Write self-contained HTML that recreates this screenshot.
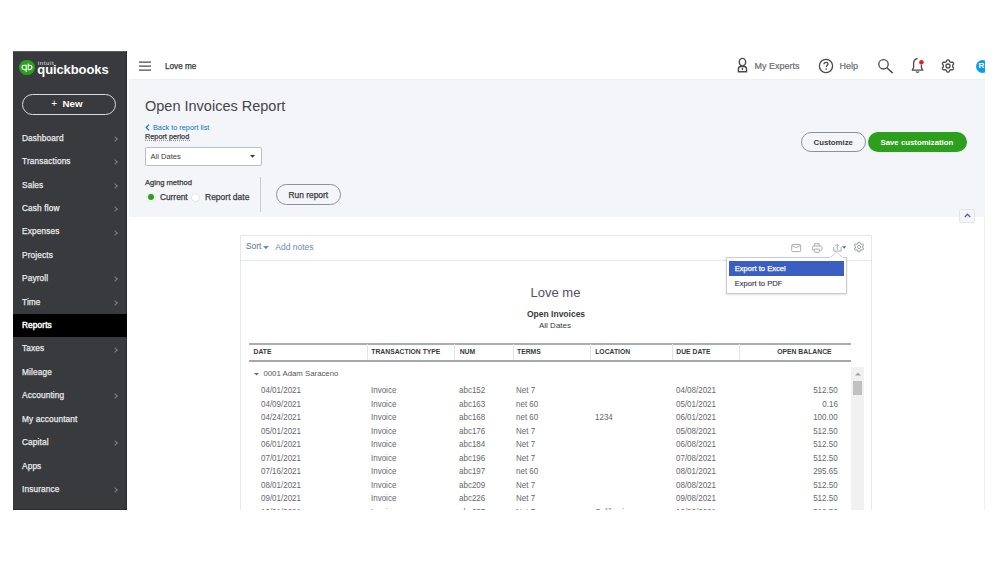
<!DOCTYPE html>
<html><head><meta charset="utf-8"><style>
*{margin:0;padding:0;box-sizing:border-box}
html,body{width:999px;height:562px;overflow:hidden;background:#fff;font-family:"Liberation Sans",sans-serif;color:#393a3d}
.a{position:absolute;white-space:nowrap;line-height:1}
.nav{position:absolute;left:13px;width:114px;height:23px;color:#e8eaed;font-size:8.3px;letter-spacing:0.12px;line-height:23px;padding-left:9px;-webkit-text-stroke:0.25px #e8eaed}
.nav .ch{position:absolute;left:100px;top:10.2px;width:4px;height:4px;border-top:1px solid #7d8087;border-right:1px solid #7d8087;transform:rotate(45deg)}
.nav.sel{background:#000;color:#fff;-webkit-text-stroke:0.45px #fff}
.td{position:absolute;font-size:8.7px;color:#66676d;line-height:1;white-space:nowrap;transform:scaleX(0.92);transform-origin:0 0}
.td.r{transform-origin:100% 0}
.th{position:absolute;font-size:6.8px;font-weight:bold;color:#393a3d;line-height:1;white-space:nowrap}
</style></head><body>
<div class="a" style="left:13px;top:51px;width:114px;height:459px;background:#393a3d"></div>
<div class="a" style="left:13px;top:51px;width:114px;height:1px;background:#5a5b5e"></div>
<div class="a" style="left:126px;top:51px;width:1px;height:459px;background:#2b2c2f"></div>
<div class="a" style="left:129px;top:79px;width:856px;height:1px;background:#eceef2"></div>
<div class="a" style="left:129px;top:80px;width:856px;height:137px;background:#f4f5f8"></div>
<div class="a" style="left:19.4px;top:59.7px;width:15.6px;height:15.6px;border-radius:50%;background:#2ca01c"></div>
<svg class="a" style="left:19.4px;top:59.7px" width="16" height="16" viewBox="0 0 16 16">
<path d="M7.2 5.3 H5.2 A2.2 2.15 0 0 0 5.2 9.6 H7.2 M7.2 4.8 V12.0" fill="none" stroke="#fff" stroke-width="1.1"/>
<path d="M9.2 5.3 H10.75 A2.2 2.15 0 0 1 10.75 9.6 H9.2 M9.2 3.4 V10.1" fill="none" stroke="#fff" stroke-width="1.1"/>
</svg>
<div class="a" style="left:37.8px;top:59.9px;color:#e6e6e6;font-size:6px;letter-spacing:0.65px">intuit</div>
<div class="a" style="left:37.3px;top:63px;color:#fff;font-size:13px;font-weight:bold;letter-spacing:-0.1px">quickbooks</div>
<div class="a" style="left:22px;top:93.5px;width:94px;height:21.5px;border:1.3px solid #dcdcdc;border-radius:11px"></div>
<div class="a" style="left:51.2px;top:99.3px;color:#fff;font-size:10px">+</div>
<div class="a" style="left:62.5px;top:99px;color:#fff;font-size:9.7px;font-weight:bold">New</div>
<div class="nav" style="top:126.80px">Dashboard<i class="ch"></i></div>
<div class="nav" style="top:150.21px">Transactions<i class="ch"></i></div>
<div class="nav" style="top:173.62px">Sales<i class="ch"></i></div>
<div class="nav" style="top:197.03px">Cash flow<i class="ch"></i></div>
<div class="nav" style="top:220.44px">Expenses<i class="ch"></i></div>
<div class="nav" style="top:243.85px">Projects</div>
<div class="nav" style="top:267.26px">Payroll<i class="ch"></i></div>
<div class="nav" style="top:290.67px">Time<i class="ch"></i></div>
<div class="nav sel" style="top:314.08px">Reports</div>
<div class="nav" style="top:337.49px">Taxes<i class="ch"></i></div>
<div class="nav" style="top:360.90px">Mileage</div>
<div class="nav" style="top:384.31px">Accounting<i class="ch"></i></div>
<div class="nav" style="top:407.72px">My accountant</div>
<div class="nav" style="top:431.13px">Capital<i class="ch"></i></div>
<div class="nav" style="top:454.54px">Apps</div>
<div class="nav" style="top:477.95px">Insurance<i class="ch"></i></div>
<svg class="a" style="left:139px;top:61px" width="12" height="10" viewBox="0 0 12 10">
<path d="M0 1.2 H12 M0 5.1 H12 M0 9.0 H12" stroke="#4a4b50" stroke-width="1.25"/></svg>
<div class="a" style="left:165px;top:63.2px;font-size:8.2px;color:#393a3d;-webkit-text-stroke:0.25px #393a3d">Love me</div>
<svg class="a" style="left:735px;top:57px" width="14" height="17" viewBox="0 0 14 17">
<ellipse cx="7.45" cy="5.1" rx="3.2" ry="3.75" fill="none" stroke="#4a4b50" stroke-width="1.4"/>
<path d="M3.4 14.8 V11.9 Q3.4 9.5 5.8 9.5 H9.1 Q11.5 9.5 11.5 11.9 V14.8 Z" fill="none" stroke="#4a4b50" stroke-width="1.4"/>
<path d="M7.45 10.2 L6.5 12.1 L7.45 13.6 L8.4 12.1 Z" fill="#4a4b50"/></svg>
<div class="a" style="left:754.5px;top:61.7px;font-size:9px;color:#6b6c72;-webkit-text-stroke:0.2px #6b6c72">My Experts</div>
<svg class="a" style="left:818px;top:58px" width="16" height="16" viewBox="0 0 16 16">
<circle cx="8" cy="8" r="6.6" fill="none" stroke="#4a4b50" stroke-width="1.3"/>
<path d="M6 6.3 C6 4.9 7 4.3 8 4.3 C9.1 4.3 10 5 10 6.1 C10 7.3 8.2 7.6 8.2 9" fill="none" stroke="#4a4b50" stroke-width="1.3"/>
<circle cx="8.2" cy="11.1" r="0.8" fill="#4a4b50"/></svg>
<div class="a" style="left:839.5px;top:61.7px;font-size:9px;color:#6b6c72;-webkit-text-stroke:0.2px #6b6c72">Help</div>
<svg class="a" style="left:877px;top:58px" width="17" height="17" viewBox="0 0 17 17">
<circle cx="6.5" cy="6.3" r="4.7" fill="none" stroke="#4a4b50" stroke-width="1.3"/>
<path d="M10.2 10 L15.2 14.6" stroke="#4a4b50" stroke-width="1.5" stroke-linecap="round"/></svg>
<svg class="a" style="left:910px;top:57px" width="16" height="17" viewBox="0 0 16 17">
<path d="M7.5 1.5 C5 2 3.6 4 3.6 6.6 V10.6 L2.2 13.2 H12.8 L11.4 10.6 V7.6" fill="none" stroke="#4a4b50" stroke-width="1.3" stroke-linejoin="round"/>
<path d="M6 14.6 C6.4 15.6 8.6 15.6 9 14.6" fill="none" stroke="#4a4b50" stroke-width="1.3"/>
<circle cx="11.4" cy="5.2" r="2.3" fill="#e0261b"/></svg>
<svg class="a" style="left:940.4px;top:58px" width="16" height="16" viewBox="0 0 16 16">
<path d="M8.00 1.85 L8.40 1.89 L8.79 2.02 L9.15 2.24 L9.38 2.83 L9.55 3.43 L9.79 3.69 L10.02 3.89 L10.27 4.06 L10.54 4.19 L10.84 4.30 L11.19 4.37 L11.78 4.22 L12.41 4.13 L12.79 4.33 L13.09 4.60 L13.33 4.92 L13.49 5.29 L13.58 5.69 L13.56 6.11 L13.17 6.62 L12.74 7.06 L12.63 7.39 L12.57 7.70 L12.55 8.00 L12.57 8.30 L12.63 8.61 L12.74 8.94 L13.17 9.38 L13.56 9.89 L13.58 10.31 L13.49 10.71 L13.33 11.07 L13.09 11.40 L12.79 11.67 L12.41 11.87 L11.78 11.78 L11.19 11.63 L10.84 11.70 L10.54 11.81 L10.27 11.94 L10.02 12.11 L9.79 12.31 L9.55 12.57 L9.38 13.17 L9.15 13.76 L8.79 13.98 L8.40 14.11 L8.00 14.15 L7.60 14.11 L7.21 13.98 L6.85 13.76 L6.62 13.17 L6.45 12.57 L6.21 12.31 L5.98 12.11 L5.73 11.94 L5.46 11.81 L5.16 11.70 L4.81 11.63 L4.22 11.78 L3.59 11.87 L3.21 11.67 L2.91 11.40 L2.67 11.08 L2.51 10.71 L2.42 10.31 L2.44 9.89 L2.83 9.38 L3.26 8.94 L3.37 8.61 L3.43 8.30 L3.45 8.00 L3.43 7.70 L3.37 7.39 L3.26 7.06 L2.83 6.62 L2.44 6.11 L2.42 5.69 L2.51 5.29 L2.67 4.92 L2.91 4.60 L3.21 4.33 L3.59 4.13 L4.22 4.22 L4.81 4.37 L5.16 4.30 L5.46 4.19 L5.72 4.06 L5.98 3.89 L6.21 3.69 L6.45 3.43 L6.62 2.83 L6.85 2.24 L7.21 2.02 L7.60 1.89 Z" fill="none" stroke="#4a4b50" stroke-width="1.35" stroke-linejoin="round"/>
<circle cx="8" cy="8" r="2" fill="none" stroke="#4a4b50" stroke-width="1.3"/></svg>
<div class="a" style="left:975.5px;top:59.5px;width:13px;height:13px;border-radius:50%;background:#0d9bf0"></div>
<div class="a" style="left:978.5px;top:62px;font-size:8px;font-weight:bold;color:#fff">R</div>
<div class="a" style="left:985px;top:0;width:14px;height:562px;background:#fff"></div>
<div class="a" style="left:145px;top:99.2px;font-size:14.5px;color:#44454a">Open Invoices Report</div>
<svg class="a" style="left:145px;top:123.5px" width="5" height="7" viewBox="0 0 5 7">
<path d="M4 0.6 L1.2 3.5 L4 6.4" fill="none" stroke="#0077c5" stroke-width="1.2"/></svg>
<div class="a" style="left:153px;top:123.5px;font-size:7.3px;color:#0077c5">Back to report list</div>
<div class="a" style="left:145px;top:132.5px;font-size:7.3px;color:#393a3d;-webkit-text-stroke:0.25px #393a3d">Report period</div>
<div class="a" style="left:145px;top:140px;width:44.5px;height:0;border-top:1px dotted #8d9096"></div>
<div class="a" style="left:145px;top:147px;width:117px;height:19px;background:#fff;border:1px solid #babec5;border-radius:2px"></div>
<div class="a" style="left:150.5px;top:153px;font-size:7.6px;color:#393a3d">All Dates</div>
<svg class="a" style="left:250px;top:155.4px" width="5" height="3" viewBox="0 0 5 3"><path d="M0 0 H5 L2.5 2.8 Z" fill="#393a3d"/></svg>
<div class="a" style="left:145px;top:179px;font-size:7.6px;color:#393a3d;-webkit-text-stroke:0.25px #393a3d">Aging method</div>
<div class="a" style="left:146px;top:192.5px;width:9.5px;height:9.5px;border-radius:50%;background:#fff;border:1px solid #e3e5e8"></div>
<div class="a" style="left:147.9px;top:194.4px;width:5.8px;height:5.8px;border-radius:50%;background:#2ca01c"></div>
<div class="a" style="left:160px;top:193px;font-size:8.3px;color:#393a3d;-webkit-text-stroke:0.25px #393a3d">Current</div>
<div class="a" style="left:190.5px;top:192.5px;width:9.5px;height:9.5px;border-radius:50%;background:#fff;border:1px solid #e3e5e8"></div>
<div class="a" style="left:205px;top:193px;font-size:8.5px;color:#393a3d;-webkit-text-stroke:0.25px #393a3d">Report date</div>
<div class="a" style="left:260px;top:177px;width:1px;height:35px;background:#c8cbd0"></div>
<div class="a" style="left:275.5px;top:184px;width:65.5px;height:20.5px;border:1px solid #8d9096;border-radius:10.5px"></div>
<div class="a" style="left:288.5px;top:191.2px;font-size:8.4px;color:#393a3d;-webkit-text-stroke:0.25px #393a3d">Run report</div>
<div class="a" style="left:800.5px;top:132px;width:65.5px;height:19.5px;border:1px solid #8d9096;border-radius:10px"></div>
<div class="a" style="left:813.5px;top:139px;font-size:7.8px;font-weight:bold;color:#393a3d">Customize</div>
<div class="a" style="left:867.5px;top:132px;width:99px;height:19.5px;background:#2ca01c;border-radius:10px"></div>
<div class="a" style="left:880.5px;top:139px;font-size:7.8px;font-weight:bold;color:#fff">Save customization</div>
<div class="a" style="left:959px;top:208.5px;width:16px;height:14px;background:#f4f5f8;border:1px solid #e3e5e8;border-radius:2px"></div>
<svg class="a" style="left:963.5px;top:213px" width="7" height="5" viewBox="0 0 7 5"><path d="M0.8 4 L3.5 1.2 L6.2 4" fill="none" stroke="#3e66b5" stroke-width="1.3"/></svg>
<div class="a" style="left:240px;top:235px;width:632px;height:300px;background:#fff;border:1px solid #e3e8f0"></div>
<div class="a" style="left:241px;top:260px;width:630px;height:1px;background:#e3e8f0"></div>
<div class="a" style="left:246px;top:242.3px;font-size:8.4px;color:#617089">Sort</div>
<svg class="a" style="left:263px;top:245.8px" width="6" height="4" viewBox="0 0 6 4"><path d="M0 0 H6 L3 3.2 Z" fill="#6b8bb0"/></svg>
<div class="a" style="left:275.3px;top:242.5px;font-size:8.5px;color:#6b8bb0">Add notes</div>
<svg class="a" style="left:790px;top:243px" width="12" height="10" viewBox="0 0 12 10">
<rect x="1.7" y="1.5" width="9" height="7.1" rx="1" fill="none" stroke="#a9acb2" stroke-width="1"/>
<path d="M2 2.6 L6.2 4.7 L10.4 2.6" fill="none" stroke="#a9acb2" stroke-width="1"/></svg>
<svg class="a" style="left:811px;top:242px" width="12" height="12" viewBox="0 0 12 12">
<path d="M3.4 4 V1.7 H8.2 V4" fill="none" stroke="#a9acb2" stroke-width="1"/>
<rect x="1.5" y="4" width="9.6" height="4.4" rx="1.6" fill="none" stroke="#a9acb2" stroke-width="1"/>
<rect x="3.4" y="7" width="5" height="3.3" rx="0.6" fill="#fff" stroke="#a9acb2" stroke-width="1"/></svg>
<svg class="a" style="left:832px;top:242px" width="16" height="12" viewBox="0 0 16 12">
<path d="M1.7 5.2 V9.1 H9.1 V5.2 M5.2 7.8 V2.4 M3.3 4.2 L5.2 2.3 L7.1 4.2" fill="none" stroke="#a9acb2" stroke-width="1"/>
<path d="M10 4.2 H14.4 L12.2 6.8 Z" fill="#4f6d92"/></svg>
<svg class="a" style="left:851.5px;top:240.4px" width="14" height="14" viewBox="0 0 14 14">
<path d="M7.00 2.15 L7.32 2.18 L7.62 2.28 L7.90 2.47 L8.09 2.94 L8.21 3.42 L8.39 3.63 L8.58 3.80 L8.78 3.93 L8.98 4.03 L9.22 4.11 L9.49 4.16 L9.97 4.03 L10.47 3.95 L10.77 4.10 L11.01 4.32 L11.20 4.57 L11.33 4.86 L11.39 5.18 L11.38 5.51 L11.06 5.91 L10.71 6.26 L10.61 6.52 L10.57 6.77 L10.55 7.00 L10.57 7.23 L10.61 7.48 L10.71 7.74 L11.06 8.09 L11.38 8.49 L11.39 8.82 L11.33 9.14 L11.20 9.42 L11.01 9.68 L10.77 9.90 L10.47 10.05 L9.97 9.97 L9.49 9.84 L9.22 9.89 L8.98 9.97 L8.78 10.07 L8.58 10.20 L8.39 10.37 L8.21 10.58 L8.09 11.06 L7.90 11.53 L7.62 11.72 L7.32 11.82 L7.00 11.85 L6.68 11.82 L6.38 11.72 L6.10 11.53 L5.91 11.06 L5.79 10.58 L5.61 10.37 L5.42 10.20 L5.23 10.07 L5.02 9.97 L4.78 9.89 L4.51 9.84 L4.03 9.97 L3.53 10.05 L3.23 9.90 L2.99 9.68 L2.80 9.43 L2.67 9.14 L2.61 8.82 L2.62 8.49 L2.94 8.09 L3.29 7.74 L3.39 7.48 L3.43 7.23 L3.45 7.00 L3.43 6.77 L3.39 6.52 L3.29 6.26 L2.94 5.91 L2.62 5.51 L2.61 5.18 L2.67 4.86 L2.80 4.57 L2.99 4.32 L3.23 4.10 L3.53 3.95 L4.03 4.03 L4.51 4.16 L4.78 4.11 L5.02 4.03 L5.22 3.93 L5.42 3.80 L5.61 3.63 L5.79 3.42 L5.91 2.94 L6.10 2.47 L6.38 2.28 L6.68 2.18 Z" fill="none" stroke="#a3a6ac" stroke-width="1.05" stroke-linejoin="round"/>
<circle cx="7" cy="7" r="1.6" fill="none" stroke="#a3a6ac" stroke-width="1"/></svg>
<div class="a" style="left:530.5px;top:286px;font-size:13px;color:#564e63">Love me</div>
<div class="a" style="left:527px;top:310px;font-size:8.5px;font-weight:bold;color:#393a3d">Open Invoices</div>
<div class="a" style="left:539px;top:321.6px;font-size:8px;color:#393a3d">All Dates</div>
<div class="a" style="left:249px;top:343px;width:602px;height:1.5px;background:#a9acb1"></div>
<div class="a" style="left:249px;top:360px;width:602px;height:1.8px;background:#a5a8ae"></div>
<div class="a" style="left:366.5px;top:344px;width:1px;height:16px;background:#e3e5e8"></div>
<div class="a" style="left:454px;top:344px;width:1px;height:16px;background:#e3e5e8"></div>
<div class="a" style="left:512.5px;top:344px;width:1px;height:16px;background:#e3e5e8"></div>
<div class="a" style="left:589.5px;top:344px;width:1px;height:16px;background:#e3e5e8"></div>
<div class="a" style="left:671.5px;top:344px;width:1px;height:16px;background:#e3e5e8"></div>
<div class="a" style="left:738.5px;top:344px;width:1px;height:16px;background:#e3e5e8"></div>
<div class="th" style="left:253.5px;top:348.6px">DATE</div>
<div class="th" style="left:371.3px;top:348.6px">TRANSACTION TYPE</div>
<div class="th" style="left:459.7px;top:348.6px">NUM</div>
<div class="th" style="left:517px;top:348.6px">TERMS</div>
<div class="th" style="left:595.2px;top:348.6px">LOCATION</div>
<div class="th" style="left:676.3px;top:348.6px">DUE DATE</div>
<div class="th" style="right:167.39999999999998px;top:348.6px">OPEN BALANCE</div>
<svg class="a" style="left:253.5px;top:372.5px" width="5" height="3" viewBox="0 0 5 3"><path d="M0 0 H5 L2.5 2.6 Z" fill="#6b6c72"/></svg>
<div class="a" style="left:263.4px;top:369.5px;font-size:7.8px;color:#55565b">0001 Adam Saraceno</div>
<div class="td" style="left:261px;top:386.40px">04/01/2021</div>
<div class="td" style="left:370.7px;top:386.40px">Invoice</div>
<div class="td" style="left:459.4px;top:386.40px">abc152</div>
<div class="td" style="left:516.4px;top:386.40px">Net 7</div>
<div class="td" style="left:676px;top:386.40px">04/08/2021</div>
<div class="td r" style="right:161px;top:386.40px">512.50</div>
<div class="td" style="left:261px;top:399.90px">04/09/2021</div>
<div class="td" style="left:370.7px;top:399.90px">Invoice</div>
<div class="td" style="left:459.4px;top:399.90px">abc163</div>
<div class="td" style="left:516.4px;top:399.90px">net 60</div>
<div class="td" style="left:676px;top:399.90px">05/01/2021</div>
<div class="td r" style="right:161px;top:399.90px">0.16</div>
<div class="td" style="left:261px;top:413.40px">04/24/2021</div>
<div class="td" style="left:370.7px;top:413.40px">Invoice</div>
<div class="td" style="left:459.4px;top:413.40px">abc168</div>
<div class="td" style="left:516.4px;top:413.40px">net 60</div>
<div class="td" style="left:595px;top:413.40px">1234</div>
<div class="td" style="left:676px;top:413.40px">06/01/2021</div>
<div class="td r" style="right:161px;top:413.40px">100.00</div>
<div class="td" style="left:261px;top:426.90px">05/01/2021</div>
<div class="td" style="left:370.7px;top:426.90px">Invoice</div>
<div class="td" style="left:459.4px;top:426.90px">abc176</div>
<div class="td" style="left:516.4px;top:426.90px">Net 7</div>
<div class="td" style="left:676px;top:426.90px">05/08/2021</div>
<div class="td r" style="right:161px;top:426.90px">512.50</div>
<div class="td" style="left:261px;top:440.40px">06/01/2021</div>
<div class="td" style="left:370.7px;top:440.40px">Invoice</div>
<div class="td" style="left:459.4px;top:440.40px">abc184</div>
<div class="td" style="left:516.4px;top:440.40px">Net 7</div>
<div class="td" style="left:676px;top:440.40px">06/08/2021</div>
<div class="td r" style="right:161px;top:440.40px">512.50</div>
<div class="td" style="left:261px;top:453.90px">07/01/2021</div>
<div class="td" style="left:370.7px;top:453.90px">Invoice</div>
<div class="td" style="left:459.4px;top:453.90px">abc196</div>
<div class="td" style="left:516.4px;top:453.90px">Net 7</div>
<div class="td" style="left:676px;top:453.90px">07/08/2021</div>
<div class="td r" style="right:161px;top:453.90px">512.50</div>
<div class="td" style="left:261px;top:467.40px">07/16/2021</div>
<div class="td" style="left:370.7px;top:467.40px">Invoice</div>
<div class="td" style="left:459.4px;top:467.40px">abc197</div>
<div class="td" style="left:516.4px;top:467.40px">net 60</div>
<div class="td" style="left:676px;top:467.40px">08/01/2021</div>
<div class="td r" style="right:161px;top:467.40px">295.65</div>
<div class="td" style="left:261px;top:480.90px">08/01/2021</div>
<div class="td" style="left:370.7px;top:480.90px">Invoice</div>
<div class="td" style="left:459.4px;top:480.90px">abc209</div>
<div class="td" style="left:516.4px;top:480.90px">Net 7</div>
<div class="td" style="left:676px;top:480.90px">08/08/2021</div>
<div class="td r" style="right:161px;top:480.90px">512.50</div>
<div class="td" style="left:261px;top:494.40px">09/01/2021</div>
<div class="td" style="left:370.7px;top:494.40px">Invoice</div>
<div class="td" style="left:459.4px;top:494.40px">abc226</div>
<div class="td" style="left:516.4px;top:494.40px">Net 7</div>
<div class="td" style="left:676px;top:494.40px">09/08/2021</div>
<div class="td r" style="right:161px;top:494.40px">512.50</div>
<div class="td" style="left:261px;top:507.90px">10/01/2021</div>
<div class="td" style="left:370.7px;top:507.90px">Invoice</div>
<div class="td" style="left:459.4px;top:507.90px">abc237</div>
<div class="td" style="left:516.4px;top:507.90px">Net 7</div>
<div class="td" style="left:595px;top:507.90px">California</div>
<div class="td" style="left:676px;top:507.90px">10/08/2021</div>
<div class="td r" style="right:161px;top:507.90px">512.50</div>
<div class="a" style="left:851px;top:367px;width:12.5px;height:150px;background:#f1f1f1"></div>
<svg class="a" style="left:854.5px;top:371.5px" width="6" height="4" viewBox="0 0 6 4"><path d="M0 3.4 H6 L3 0.4 Z" fill="#a3a3a3"/></svg>
<div class="a" style="left:852.5px;top:380.5px;width:9.5px;height:14.5px;background:#c1c1c1"></div>
<div class="a" style="left:726px;top:257px;width:120.5px;height:36.5px;background:#fff;border:1px solid #c8cbd0;box-shadow:0 1px 2px rgba(0,0,0,0.12)"></div>
<svg class="a" style="left:830px;top:251px" width="13" height="7" viewBox="0 0 13 7"><path d="M0.5 6.5 L6.5 1 L12.5 6.5" fill="#fff" stroke="#c8cbd0" stroke-width="1"/><rect x="0" y="6.2" width="13" height="1" fill="#fff"/></svg>
<div class="a" style="left:728.7px;top:261px;width:115.6px;height:15.2px;background:#3a5ec2"></div>
<div class="a" style="left:734.7px;top:264.6px;font-size:7.6px;color:#fff;-webkit-text-stroke:0.25px #fff">Export to Excel</div>
<div class="a" style="left:734.7px;top:279.5px;font-size:7.6px;color:#2f3033;-webkit-text-stroke:0.1px #2f3033">Export to PDF</div>
<div class="a" style="left:13px;top:508.5px;width:114px;height:1px;background:#2b2c2f"></div>
<div class="a" style="left:0;top:509.5px;width:999px;height:53px;background:#fff"></div>
<div class="a" style="left:984px;top:217px;width:1px;height:292.5px;background:#eef0f3"></div>
</body></html>
